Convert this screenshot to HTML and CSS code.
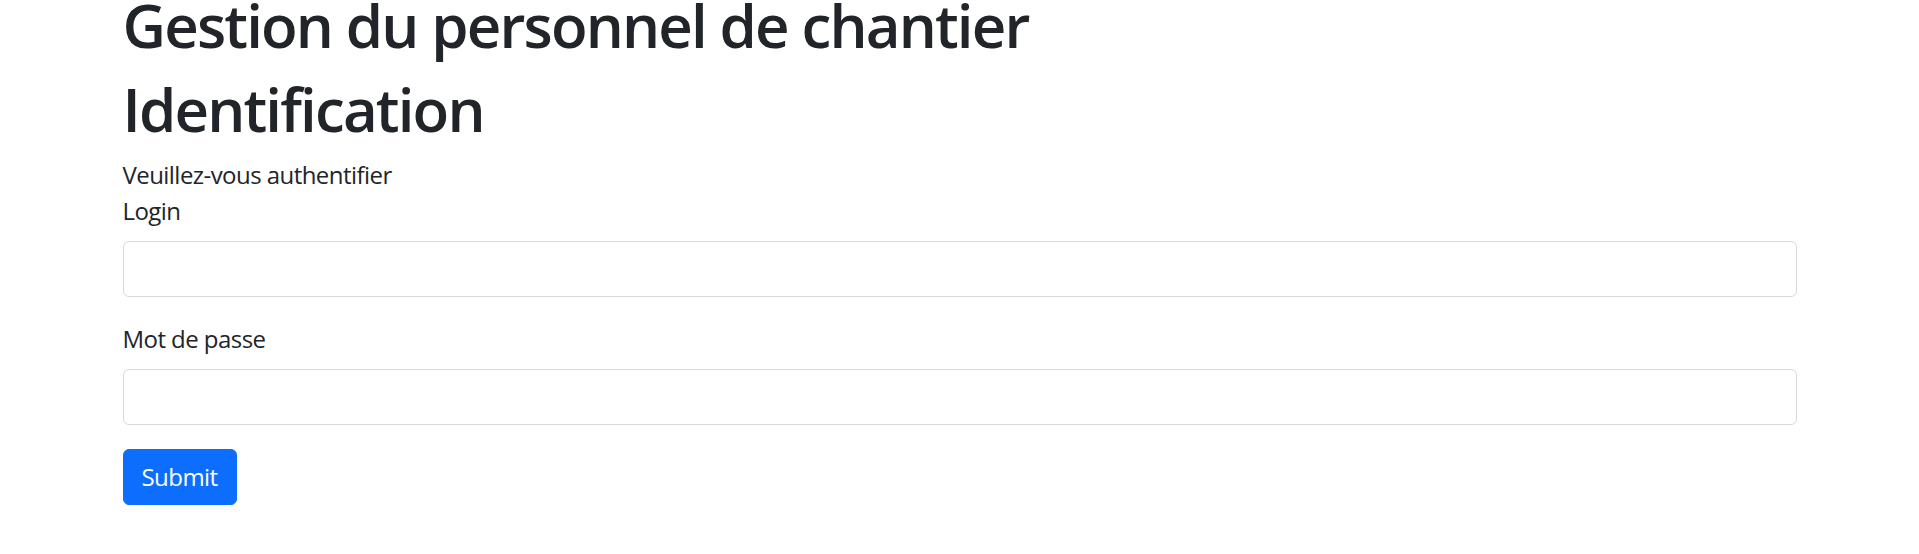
FILE: index.html
```html
<!DOCTYPE html>
<html lang="fr">
<head>
<meta charset="utf-8">
<title>Gestion du personnel de chantier</title>
<link rel="stylesheet" href="styles.css">
</head>
<body>
<div class="container">
  <h1 class="title">Gestion du personnel de chantier</h1>
  <h1 class="title">Identification</h1>
  <p class="intro">Veuillez-vous authentifier</p>
  <form class="login-form">
    <div class="field">
      <label class="field-label" for="login">Login</label>
      <input class="field-input" type="text" id="login">
    </div>
    <div class="field">
      <label class="field-label" for="password">Mot de passe</label>
      <input class="field-input" type="password" id="password">
    </div>
    <button class="btn-submit" type="submit">Submit</button>
  </form>
</div>
</body>
</html>
```
FILE: styles.css
```css
* { box-sizing: border-box; }
html, body { margin: 0; padding: 0; background: #fff; }
body {
  font-family: "Open Sans", "Noto Sans", sans-serif;
  font-size: 24px;
  line-height: 36px;
  letter-spacing: -0.55px;
  color: #212529;
}
.container {
  width: 1710px;
  margin: -11px auto 0;
  padding: 0 18px;
}
.title {
  font-size: 60px;
  font-weight: 600;
  line-height: 72px;
  letter-spacing: -1.85px;
  margin: 0 0 12px;
}
.intro { margin: 0; }
.login-form { margin: 0; }
.field { margin-bottom: 24px; }
.field-label { display: block; margin-bottom: 12px; }
.field-input {
  display: block;
  width: 100%;
  height: 56px;
  border: 1.5px solid #d6dadf;
  border-radius: 6px;
  font: inherit;
  letter-spacing: inherit;
  padding: 9px 18px;
  background: #fff;
}
.btn-submit {
  font: inherit;
  letter-spacing: inherit;
  color: #fff;
  background: #0d6efd;
  border: 1.5px solid #0d6efd;
  border-radius: 6px;
  height: 56px;
  padding: 0 18px;
  cursor: pointer;
}
```
